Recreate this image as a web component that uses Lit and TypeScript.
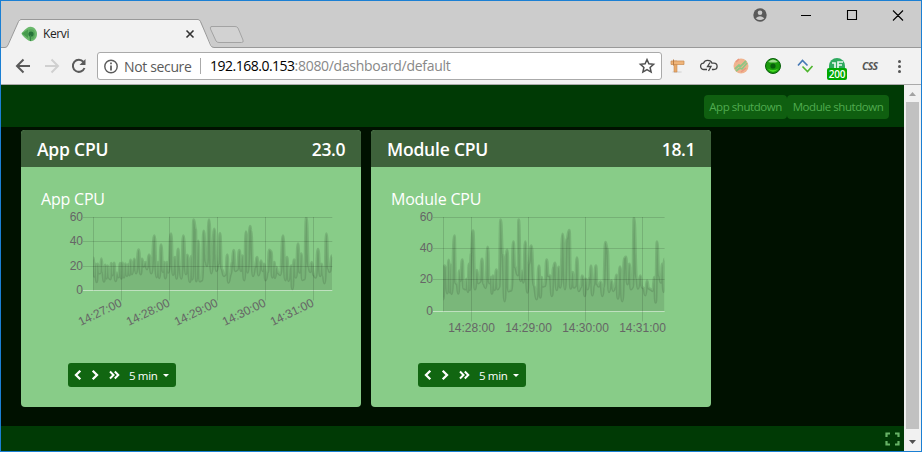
import { LitElement, html, svg, css } from "lit";
import { customElement, property } from "lit/decorators.js";

interface Tick { at: number; label: string; }
interface Plot {
  height: number;
  right: number;
  rows: Tick[];
  cols: Tick[];
  slanted: boolean;
  // x,y pairs in thirds of a pixel
  samples: number[][];
}

const APP: Plot = {
  height: 150, right: 302.3, slanted: true,
  rows: [{ at: 32.5, label: "60" }, { at: 56.5, label: "40" }, { at: 81.5, label: "20" }, { at: 105.5, label: "0" }],
  cols: [{ at: 91.5, label: "14:27:00" }, { at: 139.5, label: "14:28:00" }, { at: 187.5, label: "14:29:00" }, { at: 235.5, label: "14:30:00" }, { at: 283.5, label: "14:31:00" }],
  samples: [[25,137],[28,192],[31,155],[35,208],[38,155],[42,182],[46,182],[49,139],[53,180],[57,207],[61,158],[65,198],[68,160],[72,196],[76,200],[79,153],[82,188],[87,152],[92,205],[96,182],[101,194],[105,153],[109,198],[113,152],[117,195],[121,154],[126,190],[130,156],[133,188],[137,143],[141,185],[148,140],[153,182],[161,112],[167,185],[171,140],[176,162],[181,150],[186,170],[192,127],[199,182],[208,70],[215,194],[219,150],[223,196],[228,97],[234,178],[238,150],[241,197],[246,150],[250,180],[258,64],[264,187],[270,135],[275,198],[279,110],[283,160],[289,198],[295,70],[303,185],[307,128],[315,208],[319,132],[322,200],[326,22],[332,50],[334,206],[340,86],[344,206],[351,204],[356,56],[363,150],[366,160],[372,22],[379,182],[388,50],[394,175],[400,155],[405,63],[410,170],[417,190],[422,186],[427,127],[430,210],[437,186],[441,150],[446,114],[451,175],[457,172],[463,114],[468,175],[472,130],[478,203],[483,58],[488,180],[495,42],[498,55],[504,190],[510,165],[516,135],[521,188],[528,145],[533,175],[537,155],[542,203],[548,180],[553,113],[559,118],[562,195],[568,150],[570,196],[574,165],[579,182],[586,187],[594,70],[601,203],[606,135],[611,205],[616,165],[619,160],[622,230],[627,142],[633,195],[639,94],[644,180],[649,124],[652,202],[658,200],[664,16],[671,165],[676,178],[680,150],[686,188],[692,195],[699,111],[706,190],[710,155],[714,190],[719,212],[724,64],[730,170],[734,178],[741,130]],
};

const MODULE: Plot = {
  height: 155, right: 284.6, slanted: false,
  rows: [{ at: 32.5, label: "60" }, { at: 63.5, label: "40" }, { at: 94.5, label: "20" }, { at: 126.5, label: "0" }],
  cols: [{ at: 91.5, label: "14:28:00" }, { at: 148.5, label: "14:29:00" }, { at: 205.5, label: "14:30:00" }, { at: 262.5, label: "14:31:00" }],
  samples: [[25,260],[28,160],[31,163],[37,242],[41,143],[45,240],[47,158],[50,244],[58,70],[62,212],[66,215],[70,243],[73,175],[76,205],[82,142],[86,228],[92,230],[94,200],[99,238],[102,155],[105,232],[108,123],[114,55],[120,230],[126,174],[130,212],[135,208],[141,140],[146,215],[152,226],[158,104],[163,212],[168,195],[171,243],[174,190],[179,232],[184,172],[188,230],[192,225],[197,22],[203,125],[209,266],[213,125],[217,113],[220,236],[229,234],[235,88],[240,165],[249,188],[251,22],[257,205],[262,176],[265,210],[271,88],[277,240],[281,155],[289,100],[297,220],[305,260],[312,160],[316,255],[320,195],[323,222],[330,220],[335,142],[340,190],[345,190],[351,250],[355,165],[360,152],[365,232],[371,164],[376,225],[383,65],[390,230],[395,80],[403,54],[407,228],[413,180],[417,225],[421,222],[426,136],[431,235],[438,225],[441,190],[446,200],[449,250],[453,200],[458,230],[464,195],[468,160],[472,248],[476,220],[483,160],[486,215],[491,222],[497,208],[502,250],[506,225],[511,90],[517,108],[522,238],[529,205],[535,235],[540,225],[544,188],[549,258],[555,163],[562,266],[568,138],[573,134],[577,215],[583,155],[588,230],[593,225],[597,16],[605,200],[609,228],[616,190],[621,225],[626,228],[631,248],[636,205],[641,228],[649,232],[653,235],[658,195],[662,270],[666,88],[672,190],[678,210],[682,155],[686,238],[688,140]],
};

@customElement("time-chart")
class TimeChart extends LitElement {
  @property({ attribute: false }) plot!: Plot;
  static styles = css`
    :host { display: block; }
    svg { display: block; }
    text { font: 12px "Liberation Sans", Arial, sans-serif; fill: #666; }
    .grid { stroke: rgba(0,0,0,.13); fill: none; }
    .zero { stroke: rgba(255,255,255,.5); }
    .area { fill: rgba(0,0,0,.1); }
    .line { fill: none; stroke: rgba(0,0,0,.12); stroke-width: 3; stroke-linejoin: round; }
  `;
  render() {
    const p = this.plot;
    const pts = p.samples.map(([x, y]) => [55 + x / 3, 27.3 + y / 3]);
    let d = `M${pts[0][0]} ${pts[0][1]}`;
    for (let i = 1; i < pts.length; i++) {
      const m = (pts[i][0] + pts[i - 1][0]) / 2;
      d += `C${m} ${pts[i - 1][1]} ${m} ${pts[i][1]} ${pts[i][0]} ${pts[i][1]}`;
    }
    const base = p.rows[p.rows.length - 1].at;
    return html`<svg width="310" height=${p.height}>
      <clipPath id="plot-area"><rect x="63" y="32" width=${p.right - 63} height=${base - 32}/></clipPath>
      ${p.rows.map((r, i) => svg`
        <path class=${i === p.rows.length - 1 ? "zero" : "grid"} d="M53 ${r.at}H${p.right}"/>
        <text x="53" y=${r.at + 3.8} text-anchor="end">${r.label}</text>`)}
      <path class="grid" d="M63.5 32V${base}"/>
      ${p.cols.map(c => svg`
        <path class="grid" d="M${c.at} 32V${base + 10}"/>
        ${p.slanted
          ? svg`<text text-anchor="end" transform="translate(${c.at - 0.5} ${base + 11.5}) rotate(-26)" y="4">${c.label}</text>`
          : svg`<text text-anchor="middle" x=${c.at} y=${base + 20.5}>${c.label}</text>`}`)}
      <g clip-path="url(#plot-area)">
        <path class="area" d="${d}V${base}H${pts[0][0]}Z"/>
        <path class="line" d=${d}/>
      </g>
    </svg>`;
  }
}

@customElement("sensor-card")
class SensorCard extends LitElement {
  @property() name = "";
  @property() value = "";
  @property({ attribute: false }) plot!: Plot;
  static styles = css`
    :host { display: flex; flex-direction: column; width: 340px; height: 277px; border-radius: 4px; overflow: hidden; background: #8c8; font-family: "Open Sans", sans-serif; color: #fff; }
    .head { height: 37px; box-sizing: border-box; padding: 2px 15px 0 16px; display: flex; justify-content: space-between; align-items: center; background: #3e623b; font-size: 17.5px; line-height: 37px; font-weight: 600; letter-spacing: -.2px; }
    .head .value { letter-spacing: -.4px; margin-right: 1px; }
    .body { display: grid; grid-template-rows: 30px 148px 24px; padding: 18px 9px 0; flex: 1; }
    .title { font-size: 16px; line-height: 28px; padding-left: 11px; letter-spacing: -.2px; }
    time-chart { margin-top: -30px; }
    .controls { margin-left: 38px; width: 108px; height: 24px; border-radius: 3px; background: #161; display: flex; align-items: center; box-sizing: border-box; padding-left: 6px; font-size: 11.5px; letter-spacing: -.35px; }
    .controls span { margin-left: 9px; white-space: nowrap; width: 33px; }
    .arrows { width: 46px; }
    .caret { border: 3.5px solid transparent; border-top-color: #fff; border-bottom: 0; margin-left: 1px; }
  `;
  render() {
    return html`
      <div class="head"><span>${this.name}</span><span class="value">${this.value}</span></div>
      <div class="body">
        <div class="title">${this.name}</div>
        <time-chart .plot=${this.plot}></time-chart>
        <div class="controls">
          <svg class="arrows" width="46" height="12" fill="none" stroke="#fff" stroke-width="2.3"><path d="M6.3 1.7 2 6l4.3 4.3M18.7 1.7 23 6l-4.3 4.3"/><path stroke-width="2" d="m36 2.5 3.5 3.5L36 9.500M40.800 2.500l3.500 3.500-3.500 3.500"/></svg>
          <span>5 min</span><i class="caret"></i>
        </div>
      </div>`;
  }
}

@customElement("app-root")
class AppRoot extends LitElement {
  static styles = css`
    :host { display: block; width: 922px; height: 452px; font-family: "Open Sans", sans-serif; }
    * { box-sizing: border-box; }
    svg { display: block; flex: none; }
    .window { height: 452px; border: 1px solid #1b7fd3; display: flex; flex-direction: column; overflow: hidden; background: #010; }
    .tabs { height: 47px; background: #ccc; flex: none; display: flex; position: relative; }
    .shape { position: absolute; left: 0; top: 0; }
    .tab { position: relative; display: flex; align-items: center; height: 22px; margin: 22px 0 0 20px; width: 174px; font-size: 12px; letter-spacing: -.4px; color: #222; }
    .tab span { margin-left: 5px; flex: 1; line-height: 22px; height: 22px; }
    .sys { position: relative; margin-left: auto; }
    .bar { height: 37px; flex: none; background: #f2f2f2; border-bottom: 1px solid #aaa; display: flex; align-items: center; padding-left: 11px; }
    .omni { width: 565px; height: 28px; margin-left: 5px; background: #fff; border: 1px solid #aaa; border-radius: 3px; display: flex; align-items: center; font-size: 14px; color: #5a5a5a; white-space: nowrap; padding-left: 6px; }
    .safe { width: 76px; margin-left: 5px; letter-spacing: -.35px; }
    .url { border-left: 1px solid #aaa; line-height: 16px; padding-left: 9px; flex: 1; color: #888; letter-spacing: -.3px; }
    .url b { font-weight: 400; color: #000; letter-spacing: -.5px; }
    .ext { width: 256px; height: 32px; display: flex; position: relative; left: -1px; }
    .count { position: absolute; left: 166px; top: 18px; width: 20px; height: 12px; border-radius: 2px; background: #00a800; color: #fff; font-size: 10px; line-height: 12px; text-align: center; letter-spacing: -.3px; font-weight: 600; }
    .css { position: absolute; left: 201px; top: 7px; font: italic 700 10.5px "Open Sans", sans-serif; line-height: 18px; color: #555; letter-spacing: -.7px; }
    .page { flex: 1; display: flex; min-height: 0; }
    .app { flex: 1; display: flex; flex-direction: column; }
    .top { height: 42px; background: #003a05; display: flex; justify-content: flex-end; padding: 10px 15px 0 0; flex: none; }
    .btn { height: 24px; background: #0f5f10; color: #4fab4f; border-radius: 4px; font-size: 11.5px; line-height: 24px; text-align: center; letter-spacing: -.45px; white-space: nowrap; }
    .b1 { width: 83px; } .b2 { width: 102px; }
    .cards { flex: 1; display: flex; gap: 10px; padding: 3px 0 0 20px; }
    .foot { height: 25px; background: #003a05; display: flex; justify-content: flex-end; align-items: center; padding-right: 4px; flex: none; }
    .scroll { width: 17px; background: #f1f1f1; display: flex; flex-direction: column; align-items: center; }
    .thumb { width: 13px; height: 327px; background: #c1c1c1; margin-right: 1px; }
    .end { height: 17px; }
  `;
  render() {
    return html`<div class="window">
      <div class="tabs">
        <svg class="shape" width="920" height="47">
          <path d="M0 46.500H5.500L18.500 18.500H198L211.500 46.500H920V48H0Z" fill="#f2f2f2"/>
          <path d="M0 46.500H4Q6 46.500 7 44L17.500 20.500Q18.500 18.500 20 18.500H197Q198.500 18.500 199.500 20.500L209.500 44Q210.500 46.500 213 46.500H920" fill="none" stroke="#999"/>
          <path d="M210 25.500H234Q236 25.500 237 27L242 39Q243 41.500 240.500 41.500H218Q216 41.500 215 40L209.500 28Q208.500 25.500 211 25.500Z" fill="#d2d2d2" stroke="#a3a3a3"/>
        </svg>
        <div class="tab">
          <svg width="17" height="18"><path d="M.5 8.500Q1 7 6 3 9 .8 12.500 2.500 16 5 16 9 16 13 12.500 15.500 9 17.300 6 14.500 1 10.500 .5 8.500Z" fill="#6ab86c"/><path d="m1 8.500 6-4v8.500Z" fill="#479c4d"/><path d="M7.500 4.500Q14 3 14 9T8 14.500Z" fill="#57a85b"/><circle cx="10" cy="9" r="2.600" fill="#267339"/><path d="M9.500 10v6" stroke="#388648"/></svg>
          <span>Kervi</span>
          <svg width="10" height="10"><path d="m1.500 1.500 7 7m0-7-7 7" stroke="#333" stroke-width="1.600"/></svg>
        </div>
        <svg class="sys" width="170" height="30">
          <circle cx="9" cy="14" r="6.700" fill="#5a5a5a"/><circle cx="9" cy="11.700" r="2.300" fill="#ccc"/><path d="M4.700 17.200Q9 13.200 13.300 17.200 9 21 4.700 17.200" fill="#ccc"/>
          <path d="M50 14.500h10M96.500 9.500h9v9h-9zM142 9.500l10 10m0-10-10 10" fill="none" stroke="#000" stroke-width="1.100"/>
        </svg>
      </div>
      <div class="bar">
        <svg width="80" height="30" fill="none" stroke="#5a5a5a" stroke-width="2"><path d="M18 15H5.500M11.500 8.500 5 15l6.500 6.500"/><path stroke="#d0d0d0" d="M33 15h12.500M39.500 8.500 46 15l-6.500 6.500"/><path d="M71.500 11A6 6 0 1 0 72.500 17"/><path d="M73.500 8v6h-6z" fill="#5a5a5a" stroke="none"/></svg>
        <div class="omni">
          <svg width="15" height="15"><circle cx="7" cy="7.500" r="6.200" fill="none" stroke="#5a5a5a" stroke-width="1.400"/><path d="M7 6.500v5M7 3.500v1.700" stroke="#5a5a5a" stroke-width="1.700"/></svg>
          <span class="safe">Not secure</span>
          <div class="url"><b>192.168.0.153</b>:8080/dashboard/default</div>
          <svg width="20" height="20" overflow="visible"><path d="m6 3.500 1.900 4.300 4.700.5-3.500 3.200 1 4.600L6 13.700l-4.100 2.400 1-4.600L-.6 8.300l4.700-.5Z" fill="none" stroke="#505050" stroke-width="1.500"/></svg>
        </div>
        <div class="ext">
          <svg width="256" height="32">
            <ellipse cx="16" cy="22" rx="5" ry="1" fill="#ddd"/><path d="M13 11h3v11h-3z" fill="#e8a968" stroke="#c98b50" stroke-width=".6"/><path d="M10 11h13v3.500H10z" fill="#efb479" stroke="#c98b50" stroke-width=".7"/><path d="M12.500 9.500v6" stroke="#b97b43"/>
            <path d="M46 19.500h-3a3.200 3.200 0 0 1-.4-6.400 4.200 4.200 0 0 1 4-2.700q3.500 0 4.300 2.700h2a3 3 0 0 1 0 6.400h-2M49 12.500l-2.500 4h3.500l-2.500 4.500" fill="none" stroke="#444" stroke-width="1.300"/>
            <circle cx="80" cy="16" r="7.500" fill="#f0b48f"/><path d="m74 19 4-4 2 1 5-5M75 21l4-3 2 1 5-6" fill="none" stroke="#8fc684" stroke-width="1.800"/><path d="m75 12 3-3m2 13 5-4" stroke="#e99780" stroke-width="1.500"/>
            <circle cx="112" cy="16" r="7.500" fill="#1a9a0c" stroke="#08600b"/><path d="M107 12q5-5 10 0-5 1-10 0" fill="#a0dc91"/><path d="M106.500 18.500q5.500 7 11 0-5.500 3-11 0" fill="#45dc23"/><circle cx="112" cy="16" r="2.600" fill="#075f0c"/>
            <path d="m137 15.500 4.500-5 5 5" fill="none" stroke="#4478b5" stroke-width="1.600"/><path d="m141.500 16.500 5 5 5-5.500" fill="none" stroke="#4db52d" stroke-width="1.600"/>
            <path d="M168 18v-2a8 8 0 0 1 16 0v2Z" fill="#2faa60"/><path d="M171 13h3v6M177 19v-7h5M177 15h4" stroke="#eaf7ef" stroke-width="1.700" fill="none"/>
            <g fill="#555"><circle cx="238.500" cy="11.500" r="1.500"/><circle cx="238.500" cy="16.500" r="1.500"/><circle cx="238.500" cy="21.500" r="1.500"/></g>
          </svg>
          <span class="count">200</span><span class="css">CSS</span>
        </div>
      </div>
      <div class="page">
        <div class="app">
          <div class="top"><div class="btn b1">App shutdown</div><div class="btn b2">Module shutdown</div></div>
          <div class="cards">
            <sensor-card name="App CPU" value="23.0" .plot=${APP}></sensor-card>
            <sensor-card name="Module CPU" value="18.1" .plot=${MODULE}></sensor-card>
          </div>
          <div class="foot"><svg width="15" height="14"><path d="M1.500 5V1.500H5M10 1.500h3.500V5M1.500 9v3.500H5M10 12.500h3.500V9" fill="none" stroke="#66b266" stroke-width="2.200"/></svg></div>
        </div>
        <div class="scroll">
          <svg class="end" width="17"><path d="M5 11h7L8.500 7Z" fill="#a3a3a3"/></svg>
          <div class="thumb"></div>
          <svg width="17" height="22"><path d="M5 11h7l-3.500 4Z" fill="#505050"/></svg>
        </div>
      </div>
    </div>`;
  }
}
